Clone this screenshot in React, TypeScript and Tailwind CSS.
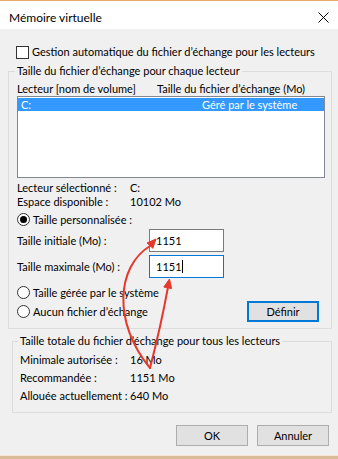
function Radio({ checked }: { checked?: boolean }) {
  return (
    <span className="w-[13px] h-[13px] rounded-full border border-[#333333] bg-white flex items-center justify-center shrink-0">
      {checked && <span className="w-[7px] h-[7px] rounded-full bg-black" />}
    </span>
  )
}

function Arrows() {
  return (
    <svg className="absolute inset-0 pointer-events-none" width="338" height="459" viewBox="0 0 338 459">
      <path d="M150 368 C 112 322, 117 266, 150 246" fill="none" stroke="#e53a2b" strokeWidth="2" strokeLinecap="round" />
      <path d="M156 239 L152.8 248.3 L147 242.9 Z" fill="#e53a2b" stroke="#e53a2b" strokeWidth="1" strokeLinejoin="round" />
      <path d="M150 368 C 156 345, 162 320, 168 287" fill="none" stroke="#e53a2b" strokeWidth="2" strokeLinecap="round" />
      <path d="M169.5 279 L171.6 288.6 L163.8 287 Z" fill="#e53a2b" stroke="#e53a2b" strokeWidth="1" strokeLinejoin="round" />
    </svg>
  )
}

export default function App() {
  return (
    <div className="relative w-[338px] h-[459px] overflow-hidden bg-[#f0f0f0] flex flex-col text-[11px] leading-[14px] text-black whitespace-nowrap font-[Lato,'Liberation_Sans',sans-serif]">
      <div className="h-px bg-[#eda866]" />
      <div className="h-[28px] bg-white flex items-center justify-between pl-[9px] pr-[9px] pt-[5px]">
        <span className="text-[12px]">Mémoire virtuelle</span>
        <svg width="11" height="11" viewBox="0 0 11 11">
          <path d="M0.5 0.5 L10.5 10.5 M10.5 0.5 L0.5 10.5" stroke="#000" strokeWidth="1" />
        </svg>
      </div>

      <div className="mt-[16px] pl-[16px] flex items-center gap-[3px] h-[14px]">
        <span className="w-[13px] h-[13px] border border-[#333333] bg-white shrink-0" />
        <span>Gestion automatique du fichier d’échange pour les lecteurs</span>
      </div>

      <fieldset className="mt-[5px] ml-[8px] w-[324px] border border-[#dcdcdc] pl-[8px] pr-[6px] pb-[6px]">
        <legend className="-ml-[2px] px-[2px] leading-[14px]">Taille du fichier d’échange pour chaque lecteur</legend>

        <div className="mt-[4px] flex h-[14px]">
          <span className="w-[140px]">Lecteur [nom de volume]</span>
          <span>Taille du fichier d’échange (Mo)</span>
        </div>

        <div className="h-[82px] w-[308px] border border-[#828790] bg-white pt-px">
          <div className="h-[13px] bg-[#3399ff] text-white flex items-center leading-[13px]">
            <span className="w-[184px] pl-[3px]">C:</span>
            <span>Géré par le système</span>
          </div>
        </div>

        <div className="mt-[3px] flex h-[14px]">
          <span className="w-[113px]">Lecteur sélectionné :</span>
          <span>C:</span>
        </div>
        <div className="flex h-[14px]">
          <span className="w-[113px]">Espace disponible :</span>
          <span>10102 Mo</span>
        </div>

        <div className="mt-[3px] flex items-center gap-[3px] h-[15px]">
          <Radio checked />
          <span>Taille personnalisée :</span>
        </div>

        <div className="mt-[2px] flex items-center h-[23px]">
          <span className="w-[132px]">Taille initiale (Mo) :</span>
          <div className="w-[75px] h-[23px] border border-[#7a7a7a] bg-white pl-[6px] flex items-center">1151</div>
        </div>
        <div className="mt-[3px] flex items-center h-[23px]">
          <span className="w-[132px]">Taille maximale (Mo) :</span>
          <div className="w-[75px] h-[23px] border border-[#0078d7] bg-white pl-[6px] flex items-center">
            1151<span className="w-px h-[13px] bg-black" />
          </div>
        </div>

        <div className="mt-[7px] flex items-center gap-[3px] h-[15px]">
          <Radio />
          <span>Taille gérée par le système</span>
        </div>
        <div className="mt-[1px] flex items-center h-[21px]">
          <Radio />
          <span className="ml-[3px]">Aucun fichier d’échange</span>
          <div className="ml-auto mr-[6px] w-[72px] h-[21px] border-2 border-[#0078d7] bg-[#e1e1e1] flex items-center justify-center">Définir</div>
        </div>
      </fieldset>

      <fieldset className="mt-[5px] ml-[12px] w-[320px] border border-[#dcdcdc] pl-[7px] pb-[7px]">
        <legend className="-ml-[2px] px-[2px] leading-[14px]">Taille totale du fichier d’échange pour tous les lecteurs</legend>
        <div className="mt-[3px] flex flex-col">
          <div className="flex items-center h-[18px]">
            <span className="w-[110px]">Minimale autorisée :</span>
            <span>16 Mo</span>
          </div>
          <div className="flex items-center h-[18px]">
            <span className="w-[110px]">Recommandée :</span>
            <span>1151 Mo</span>
          </div>
          <div className="flex items-center h-[18px]">
            <span className="w-[110px]">Allouée actuellement :</span>
            <span>640 Mo</span>
          </div>
        </div>
      </fieldset>

      <div className="mt-[12px] flex justify-end gap-[9px] pr-[9px]">
        <div className="w-[72px] h-[21px] border border-[#adadad] bg-[#e1e1e1] flex items-center justify-center">OK</div>
        <div className="w-[72px] h-[21px] border border-[#adadad] bg-[#e1e1e1] flex items-center justify-center">Annuler</div>
      </div>

      <div className="flex-1" />
      <div className="h-px bg-[#f3e3d0]" />
      <div className="h-[3px] bg-[#d9bb98]" />

      <Arrows />
    </div>
  )
}
